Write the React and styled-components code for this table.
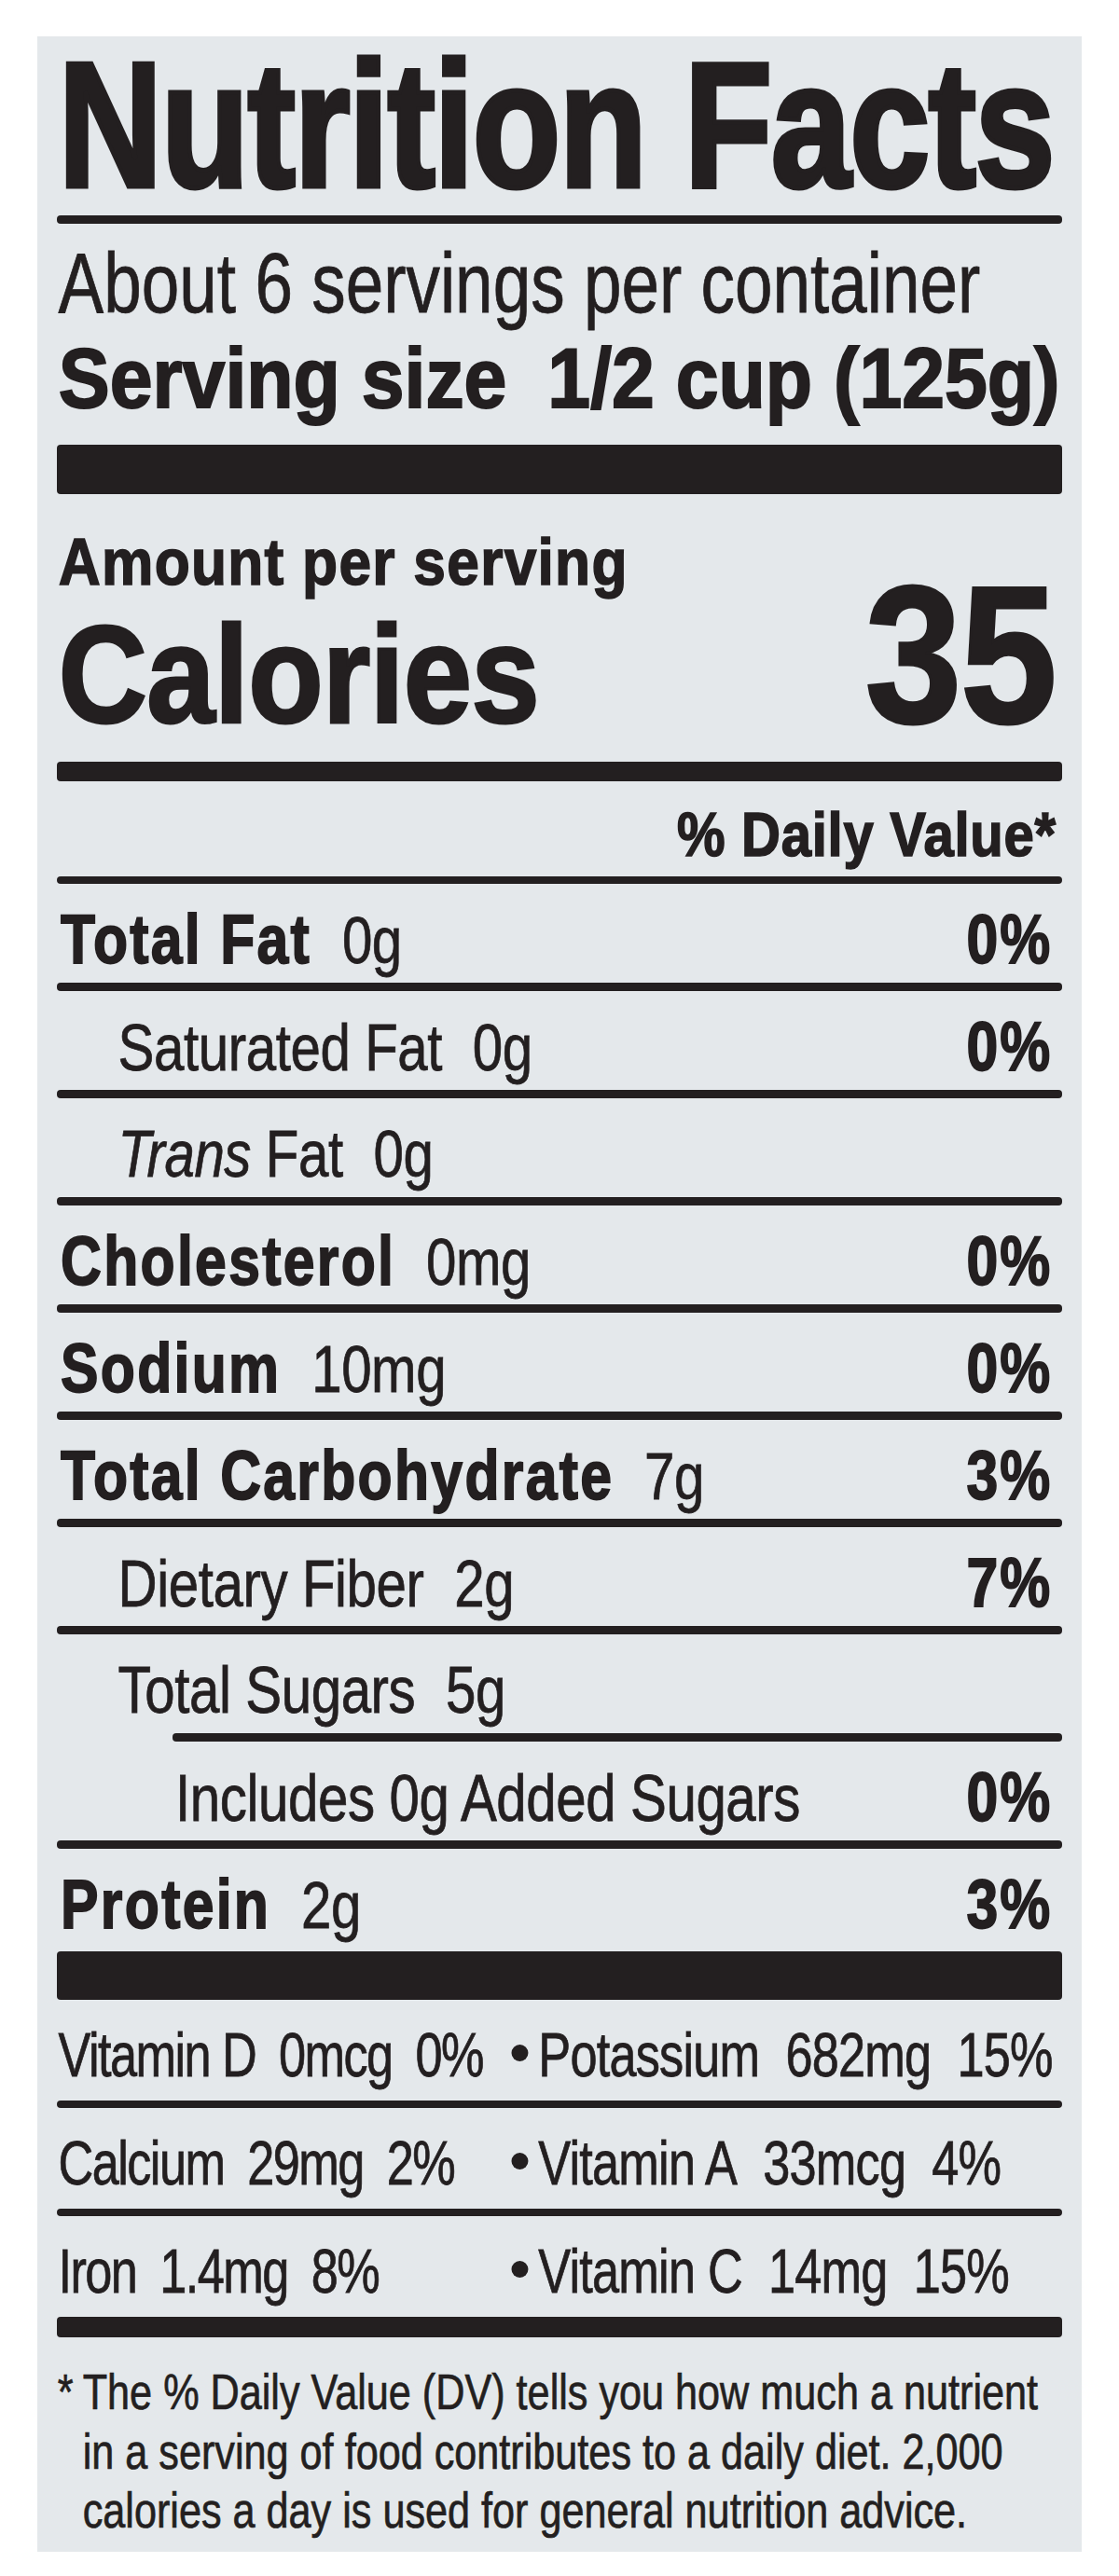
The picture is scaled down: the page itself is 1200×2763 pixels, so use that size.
import React from 'react';
import styled, { createGlobalStyle, css } from 'styled-components';

const INK = '#231f20';
const SANS = `"Liberation Sans", Arial, Helvetica, sans-serif`;

/* Horizontal condensing: the element is laid out wider and scaled back to fit. */
const squeeze = (sx) => css`
  width: calc(100% / ${sx});
  transform: scaleX(${sx});
  transform-origin: 0 0;
`;

const Global = createGlobalStyle`
  html, body { margin: 0; padding: 0; background: #ffffff; }
  body { font-family: ${SANS}; color: ${INK}; }
`;

const Page = styled.div`
  padding: 39px 40px 26px;
  background: #ffffff;
`;

const Panel = styled.section`
  display: flow-root;
  width: 1120px;
  box-sizing: border-box;
  padding: 0 21px 12px;
  overflow-x: clip;
  background: #e4e8eb;
  color: ${INK};
  font-family: ${SANS};
`;

const Title = styled.h1`
  ${squeeze(0.81)}
  box-sizing: border-box;
  margin: -12px 0 -12px;
  padding-left: 2px;
  font-weight: 700;
  font-size: 191px;
  line-height: 214px;
  letter-spacing: -2px;
  -webkit-text-stroke: 5px ${INK};
  white-space: nowrap;
`;

const Rule = styled.div`
  height: ${(p) => p.$h}px;
  margin: ${(p) => p.$mt || 0}px 0 0 ${(p) => p.$inset || 0}px;
  background: ${INK};
  border-radius: ${(p) => Math.min(p.$h / 2, 4)}px;
`;

const Servings = styled.div`
  ${squeeze(0.81)}
  box-sizing: border-box;
  margin-top: 14px;
  padding-left: 2px;
  font-size: 90px;
  line-height: 100px;
  -webkit-text-stroke: 0.8px ${INK};
  white-space: nowrap;
`;

const ServingSize = styled.div`
  ${squeeze(0.915)}
  box-sizing: border-box;
  display: flex;
  gap: 48px;
  margin-top: 2px;
  padding-left: 2px;
  font-weight: 700;
  font-size: 90px;
  line-height: 100px;
  -webkit-text-stroke: 2px ${INK};
  white-space: nowrap;
`;

const CalBlock = styled.div`
  ${squeeze(0.89)}
  box-sizing: border-box;
  display: flex;
  justify-content: space-between;
  align-items: last baseline;
  margin-top: 33px;
  padding: 0 8px 0 2px;
  font-weight: 700;
  white-space: nowrap;
`;

const CalStack = styled.div`
  display: flex;
  flex-direction: column;
`;

const AmountLine = styled.div`
  font-size: 70px;
  line-height: 80px;
  letter-spacing: 1.4px;
  -webkit-text-stroke: 1.6px ${INK};
`;

const CalLabel = styled.div`
  font-size: 148px;
  line-height: 162px;
  letter-spacing: -0.6px;
  -webkit-text-stroke: 3px ${INK};
`;

const CalValue = styled.div`
  font-size: 210px;
  line-height: 200px;
  letter-spacing: -2px;
  -webkit-text-stroke: 3px ${INK};
`;

const DvHead = styled.div`
  ${squeeze(0.88)}
  box-sizing: border-box;
  margin-top: 22px;
  padding-right: 7px;
  text-align: right;
  font-weight: 700;
  font-size: 66px;
  line-height: 70px;
  letter-spacing: 0.8px;
  -webkit-text-stroke: 1.6px ${INK};
  white-space: nowrap;
`;

const NRow = styled.div`
  ${squeeze(0.82)}
  display: flex;
  align-items: baseline;
  box-sizing: border-box;
  height: ${(p) => p.$h || 106}px;
  padding: 14px 13px 0 ${(p) => 5 + p.$indent * 75}px;
  font-size: 71px;
  line-height: 92px;
  white-space: nowrap;
`;

const Name = styled.span`
  font-weight: ${(p) => (p.$bold ? 700 : 400)};
  font-size: ${(p) => (p.$bold ? 74 : 71)}px;
  letter-spacing: ${(p) => (p.$bold ? '2.8px' : '-0.5px')};
  -webkit-text-stroke: ${(p) => (p.$bold ? `1.8px ${INK}` : `0.8px ${INK}`)};
`;

const Amount = styled.span`
  margin-left: 40px;
  letter-spacing: -0.5px;
  -webkit-text-stroke: 0.8px ${INK};
`;

const Pct = styled.span`
  margin-left: auto;
  font-weight: 700;
  font-size: 74px;
  letter-spacing: 2.5px;
  -webkit-text-stroke: 1.8px ${INK};
`;

const VRow = styled.div`
  ${squeeze(0.78)}
  display: grid;
  grid-template-columns: 623px 1fr;
  box-sizing: border-box;
  height: 108px;
  padding: 10px 0 0 2px;
  font-size: 67px;
  line-height: 98px;
  -webkit-text-stroke: 0.8px ${INK};
  white-space: nowrap;
`;

const VHalf = styled.div`
  display: flex;
  align-items: baseline;
  gap: ${(p) => (p.$tight ? 32 : 36)}px;
  letter-spacing: ${(p) => (p.$tight ? -2 : -1)}px;
`;

const Lead = styled.span``;

const Bullet = styled.span`
  display: inline-block;
  width: 23px;
  height: 18px;
  margin-right: 14px;
  border-radius: 50%;
  background: ${INK};
  vertical-align: 16px;
`;

const Foot = styled.div`
  ${squeeze(0.815)}
  display: flex;
  box-sizing: border-box;
  margin-top: 27px;
  font-size: 53px;
  line-height: 63.5px;
  -webkit-text-stroke: 0.7px ${INK};
  white-space: nowrap;
`;

const Star = styled.span`
  flex: 0 0 33px;
  padding-left: 1px;
`;

const FootText = styled.p`
  margin: 0;
`;

const nutrients = [
  { name: 'Total Fat', bold: true, amt: '0g', pct: '0%' },
  { name: 'Saturated Fat', indent: 1, amt: '0g', pct: '0%' },
  { name: (<><i>Trans</i> Fat</>), indent: 1, amt: '0g' },
  { name: 'Cholesterol', bold: true, amt: '0mg', pct: '0%' },
  { name: 'Sodium', bold: true, amt: '10mg', pct: '0%' },
  { name: 'Total Carbohydrate', bold: true, amt: '7g', pct: '3%' },
  { name: 'Dietary Fiber', indent: 1, amt: '2g', pct: '7%' },
  { name: 'Total Sugars', indent: 1, amt: '5g', inset: 124 },
  { name: 'Includes 0g Added Sugars', indent: 2, pct: '0%' },
  { name: 'Protein', bold: true, amt: '2g', pct: '3%', last: true },
];

const vitamins = [
  [['Vitamin D', '0mcg', '0%'], ['Potassium', '682mg', '15%']],
  [['Calcium', '29mg', '2%'], ['Vitamin A', '33mcg', '4%']],
  [['Iron', '1.4mg', '8%'], ['Vitamin C', '14mg', '15%']],
];

export default function App() {
  return (
    <Page>
      <Global />
      <Panel>
        <Title>Nutrition Facts</Title>
        <Rule $h={9} $mt={2} />
        <Servings>About 6 servings per container</Servings>
        <ServingSize>
          <span>Serving size</span>
          <span>1/2 cup (125g)</span>
        </ServingSize>
        <Rule $h={53} $mt={21} />
        <CalBlock>
          <CalStack>
            <AmountLine>Amount per serving</AmountLine>
            <CalLabel>Calories</CalLabel>
          </CalStack>
          <CalValue>35</CalValue>
        </CalBlock>
        <Rule $h={21} $mt={12} />
        <DvHead>% Daily Value*</DvHead>
        <Rule $h={8} $mt={10} />
        {nutrients.map((n, i) => (
          <React.Fragment key={i}>
            <NRow $indent={n.indent || 0} $h={n.last ? 110 : 106}>
              <Name $bold={n.bold}>{n.name}</Name>
              {n.amt && <Amount>{n.amt}</Amount>}
              {n.pct && <Pct>{n.pct}</Pct>}
            </NRow>
            {n.last ? <Rule $h={52} /> : <Rule $h={9} $inset={n.inset} />}
          </React.Fragment>
        ))}
        {vitamins.map((row, i) => (
          <React.Fragment key={i}>
            <VRow>
              <VHalf $tight>
                <Lead>{row[0][0]}</Lead>
                <span>{row[0][1]}</span>
                <span>{row[0][2]}</span>
              </VHalf>
              <VHalf>
                <Lead>
                  <Bullet />
                  {row[1][0]}
                </Lead>
                <span>{row[1][1]}</span>
                <span>{row[1][2]}</span>
              </VHalf>
            </VRow>
            <Rule $h={i === 2 ? 22 : 8} />
          </React.Fragment>
        ))}
        <Foot>
          <Star>*</Star>
          <FootText>
            The % Daily Value (DV) tells you how much a nutrient
            <br />
            in a serving of food contributes to a daily diet. 2,000
            <br />
            calories a day is used for general nutrition advice.
          </FootText>
        </Foot>
      </Panel>
    </Page>
  );
}
